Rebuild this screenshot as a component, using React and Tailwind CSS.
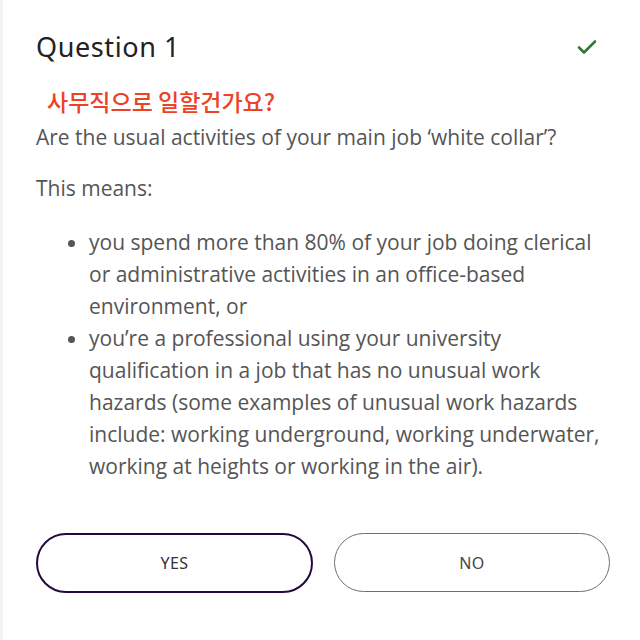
import React from 'react';

const Check = () => (
  <svg width="22" height="18" viewBox="0 0 22 18" fill="none">
    <path d="M3 9.5l5 5L19 3.5" stroke="#2f7a3a" strokeWidth="2.6" strokeLinecap="round" strokeLinejoin="round" />
  </svg>
);

const App = () => {
  return (
    <div className="w-[640px] h-[640px] bg-white border-l-[3px] border-[#f4f4f4] overflow-hidden">
      <div className="pl-[33px] pr-[28px] pt-[30px]">
        {/* Header */}
        <div className="flex items-center justify-between">
          <h2 className="text-[27px] leading-[34px] text-[#222] tracking-[0.6px]" style={{ fontFamily: '"Noto Sans", sans-serif' }}>
            Question 1
          </h2>
          <div className="mr-[14px]">
            <Check />
          </div>
        </div>

        {/* Translation */}
        <p className="mt-[22px] pl-[11px] text-[23px] leading-[30px] font-medium text-[#ec4226]" style={{ fontFamily: '"Noto Sans CJK KR", sans-serif' }}>
          사무직으로 일할건가요?
        </p>

        <div className="text-[21px] leading-[32px] text-[#555]" style={{ fontFamily: '"Open Sans", sans-serif' }}>
          <p className="mt-[5px]">Are the usual activities of your main job ‘white collar’?</p>
          <p className="mt-[19px]">This means:</p>
          <ul className="mt-[22px] pl-[53px] list-disc marker:text-[#555]">
            <li>you spend more than 80% of your job doing clerical or administrative activities in an office-based environment, or</li>
            <li>you’re a professional using your university qualification in a job that has no unusual work hazards (some examples of unusual work hazards include: working underground, working underwater, working at heights or working in the air).</li>
          </ul>
        </div>

        {/* Answers */}
        <div className="mt-[51px] flex gap-[21px]">
          <button className="w-[277px] h-[60px] shrink-0 rounded-full border-2 border-[#24093f] text-[16px] text-[#333] tracking-[0.5px]" style={{ fontFamily: '"Noto Sans", sans-serif' }}>
            YES
          </button>
          <button className="w-[276px] h-[59px] shrink-0 rounded-full border border-[#6f6f6f] text-[16px] text-[#444] tracking-[0.5px]" style={{ fontFamily: '"Noto Sans", sans-serif' }}>
            NO
          </button>
        </div>
      </div>
    </div>
  );
};

export default App;
